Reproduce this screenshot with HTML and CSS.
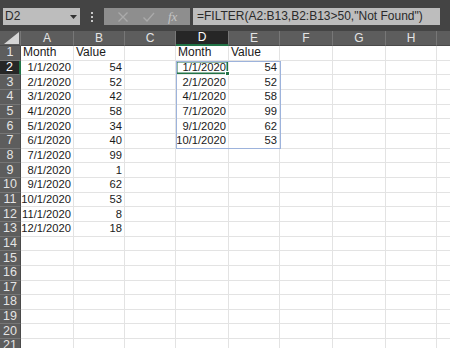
FILE: index.html
```html
<!DOCTYPE html>
<html lang="en">
<head>
  <meta charset="UTF-8" />
  <title>FILTER</title>
  <link rel="stylesheet" href="styles.css">
</head>
<body>
  <div class="toolbar">
    <div class="namebox">D2
      <svg class="caret" width="7" height="4" viewBox="0 0 7 4"><path d="M0 0h7L3.5 4z" fill="#333"/></svg>
    </div>
    <div class="dots"><span></span><span></span><span></span></div>
    <div class="buttons">
      <svg width="12" height="12" viewBox="0 0 12 12"><path d="M1.5 1.5l9 9M10.5 1.5l-9 9" stroke="#aaa" stroke-width="1.3"/></svg>
      <svg width="13" height="12" viewBox="0 0 13 12"><path d="M1.5 6.5l3.5 3.5 7-8" stroke="#aaa" stroke-width="1.3" fill="none"/></svg>
      <span class="fx">fx</span>
    </div>
    <div class="formula">=FILTER(A2:B13,B2:B13&gt;50,"Not Found")</div>
  </div>

  <div class="sheet">
    <div class="row head">
      <div class="corner"><svg width="15" height="12" viewBox="0 0 15 12"><path d="M15 0v12H0z" fill="#d6d6d6"/></svg></div>
      <div>A</div><div>B</div><div>C</div><div class="active">D</div><div>E</div><div>F</div><div>G</div><div>H</div><div></div>
    </div>
    <div class="row"><div class="num">1</div><div>Month</div><div>Value</div><div></div><div>Month</div><div>Value</div><div></div><div></div><div></div><div></div></div>
    <div class="row"><div class="num active">2</div><div class="r">1/1/2020</div><div class="r">54</div><div></div><div class="r sel">1/1/2020</div><div class="r">54</div><div></div><div></div><div></div><div></div></div>
    <div class="row"><div class="num">3</div><div class="r">2/1/2020</div><div class="r">52</div><div></div><div class="r">2/1/2020</div><div class="r">52</div><div></div><div></div><div></div><div></div></div>
    <div class="row"><div class="num">4</div><div class="r">3/1/2020</div><div class="r">42</div><div></div><div class="r">4/1/2020</div><div class="r">58</div><div></div><div></div><div></div><div></div></div>
    <div class="row"><div class="num">5</div><div class="r">4/1/2020</div><div class="r">58</div><div></div><div class="r">7/1/2020</div><div class="r">99</div><div></div><div></div><div></div><div></div></div>
    <div class="row"><div class="num">6</div><div class="r">5/1/2020</div><div class="r">34</div><div></div><div class="r">9/1/2020</div><div class="r">62</div><div></div><div></div><div></div><div></div></div>
    <div class="row"><div class="num">7</div><div class="r">6/1/2020</div><div class="r">40</div><div></div><div class="r">10/1/2020</div><div class="r">53</div><div></div><div></div><div></div><div></div></div>
    <div class="row"><div class="num">8</div><div class="r">7/1/2020</div><div class="r">99</div><div></div><div></div><div></div><div></div><div></div><div></div><div></div></div>
    <div class="row"><div class="num">9</div><div class="r">8/1/2020</div><div class="r">1</div><div></div><div></div><div></div><div></div><div></div><div></div><div></div></div>
    <div class="row"><div class="num">10</div><div class="r">9/1/2020</div><div class="r">62</div><div></div><div></div><div></div><div></div><div></div><div></div><div></div></div>
    <div class="row"><div class="num">11</div><div class="r">10/1/2020</div><div class="r">53</div><div></div><div></div><div></div><div></div><div></div><div></div><div></div></div>
    <div class="row"><div class="num">12</div><div class="r">11/1/2020</div><div class="r">8</div><div></div><div></div><div></div><div></div><div></div><div></div><div></div></div>
    <div class="row"><div class="num">13</div><div class="r">12/1/2020</div><div class="r">18</div><div></div><div></div><div></div><div></div><div></div><div></div><div></div></div>
    <div class="row"><div class="num">14</div><div></div><div></div><div></div><div></div><div></div><div></div><div></div><div></div><div></div></div>
    <div class="row"><div class="num">15</div><div></div><div></div><div></div><div></div><div></div><div></div><div></div><div></div><div></div></div>
    <div class="row"><div class="num">16</div><div></div><div></div><div></div><div></div><div></div><div></div><div></div><div></div><div></div></div>
    <div class="row"><div class="num">17</div><div></div><div></div><div></div><div></div><div></div><div></div><div></div><div></div><div></div></div>
    <div class="row"><div class="num">18</div><div></div><div></div><div></div><div></div><div></div><div></div><div></div><div></div><div></div></div>
    <div class="row"><div class="num">19</div><div></div><div></div><div></div><div></div><div></div><div></div><div></div><div></div><div></div></div>
    <div class="row"><div class="num">20</div><div></div><div></div><div></div><div></div><div></div><div></div><div></div><div></div><div></div></div>
    <div class="row"><div class="num">21</div><div></div><div></div><div></div><div></div><div></div><div></div><div></div><div></div><div></div></div>
    <div class="spill"></div>
  </div>
</body>
</html>
```

FILE: styles.css
```css
body { margin: 0; background: #fff; font-family: "Liberation Sans", Arial, sans-serif; overflow: hidden; width: 450px; height: 348px; }

.toolbar { height: 31px; background: #444; display: flex; align-items: flex-start; padding-top: 8px; box-sizing: border-box; }
.namebox { margin-left: 3px; width: 77px; height: 17px; background: #bdbdbd; color: #2a2a2a; font-size: 12px; line-height: 17px; padding-left: 2px; box-sizing: border-box; display: flex; justify-content: space-between; align-items: center; }
.caret { margin-right: 3px; }
.dots { width: 24px; height: 17px; display: flex; flex-direction: column; align-items: center; justify-content: center; gap: 2px; }
.dots span { width: 2px; height: 2px; background: #c8c8c8; }
.buttons { width: 86px; height: 17px; background: #8e8e8e; display: flex; align-items: center; justify-content: space-around; padding: 0 6px; box-sizing: border-box; }
.fx { font-family: "Liberation Serif", serif; font-style: italic; font-size: 13px; color: #c4c4c4; }
.formula { margin-left: 3px; width: 247px; height: 17px; background: #bdbdbd; color: #2a2a2a; font-size: 12px; line-height: 17px; padding-left: 4px; box-sizing: border-box; white-space: nowrap; overflow: hidden; }

.sheet { position: relative; }
.row { display: grid; grid-template-columns: 21px 53px 51px 51px 53px 51px 53px 53px 51px 52px; height: 14.67px; }
.row > div { border-right: 1px solid #e3e3e3; border-bottom: 1px solid #e3e3e3; font-size: 12px; color: #1a1a1a; padding: 0 2px; display: flex; align-items: center; line-height: 13px; white-space: nowrap; box-sizing: border-box; }
.row > .r { justify-content: flex-end; font-size: 11.2px; }

.head { height: 15px; background: #5d5d5d; }
.head > div { background: #5d5d5d; color: #e4e4e4; justify-content: center; align-items: center; border-right: 1px solid #777; border-bottom: 1px solid #4a4a4a; }
.head > .corner { align-items: flex-end; justify-content: flex-end; padding: 0 1px 1px 0; }
.head > .active { background: #262626; color: #fff; border-bottom: 2px solid #217346; }

.row > .num { background: #5d5d5d; color: #e4e4e4; justify-content: center; align-items: center; border-right: 1px solid #4a4a4a; border-bottom: 1px solid #767676; padding: 0; font-size: 12.5px; }
.row > .num.active { background: #262626; color: #fff; border-right: 2px solid #217346; }

.row > .sel { box-shadow: inset 0 0 0 1.5px #217346; position: relative; }
.row > .sel::after { content: ""; position: absolute; right: -2px; bottom: -2px; width: 5px; height: 5px; background: #217346; border: 1px solid #fff; box-sizing: border-box; }

.spill { position: absolute; left: 176px; top: 29.5px; width: 105px; height: 88.5px; border: 1px solid #9db3dc; box-sizing: border-box; pointer-events: none; }
```
